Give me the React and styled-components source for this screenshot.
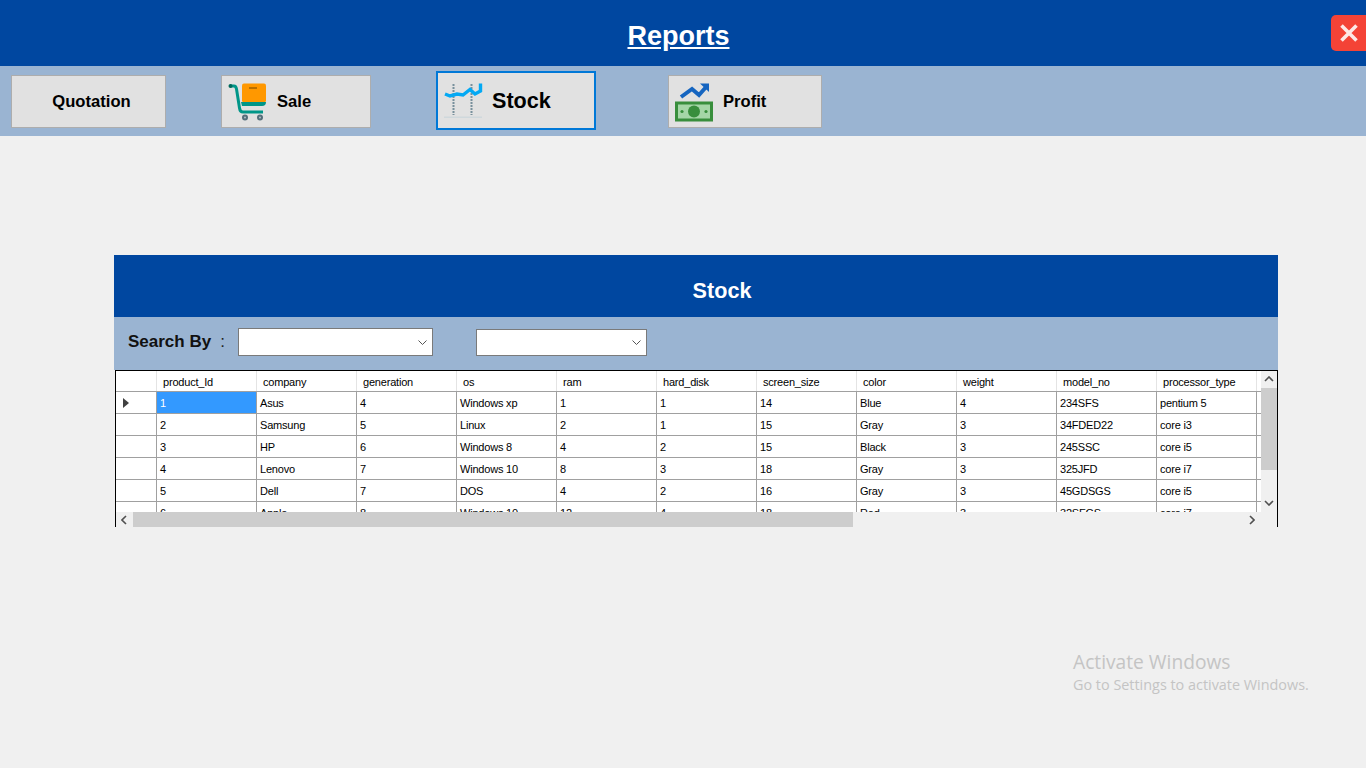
import styled, { createGlobalStyle } from "styled-components"

const columns = ["product_Id", "company", "generation", "os", "ram", "hard_disk", "screen_size", "color", "weight", "model_no", "processor_type"]

const rows = [
    ["1", "Asus", "4", "Windows xp", "1", "1", "14", "Blue", "4", "234SFS", "pentium 5"],
    ["2", "Samsung", "5", "Linux", "2", "1", "15", "Gray", "3", "34FDED22", "core i3"],
    ["3", "HP", "6", "Windows 8", "4", "2", "15", "Black", "3", "245SSC", "core i5"],
    ["4", "Lenovo", "7", "Windows 10", "8", "3", "18", "Gray", "3", "325JFD", "core i7"],
    ["5", "Dell", "7", "DOS", "4", "2", "16", "Gray", "3", "45GDSGS", "core i5"],
    ["6", "Apple", "8", "Windows 10", "12", "4", "18", "Red", "3", "32SFGS", "core i7"],
]

export default function App() {
    return (
        <Page>
            <GlobalStyle />
            <TitleBar>
                <Title>Reports</Title>
                <CloseButton aria-label="close">
                    <svg width="20" height="20" viewBox="0 0 20 20">
                        <path d="M2.5 2.5 L17.5 17.5 M17.5 2.5 L2.5 17.5" stroke="#fde8e6" strokeWidth="3.6" />
                    </svg>
                </CloseButton>
            </TitleBar>
            <Toolbar>
                <ToolButton $width={155} $left={11} $center>Quotation</ToolButton>
                <ToolButton $width={150} $left={55} $gap={9}><CartIcon />Sale</ToolButton>
                <ToolButton $width={160} $left={65} $gap={8} $active><StockIcon />Stock</ToolButton>
                <ToolButton $width={154} $left={72} $gap={10}><ProfitIcon />Profit</ToolButton>
            </Toolbar>
            <Panel>
                <PanelHeader>Stock</PanelHeader>
                <SearchBar>
                    <SearchLabel>Search By</SearchLabel>
                    <Colon>:</Colon>
                    <Combo $width={195} $height={28} />
                    <Combo $width={171} $height={27} $left={43} />
                </SearchBar>
                <GridFrame>
                    <GridBody>
                        <Table>
                            <HeaderRow>
                                <RowHead $header />
                                {columns.map((c) => <HeaderCell key={c}>{c}</HeaderCell>)}
                                <HeaderCell />
                            </HeaderRow>
                            {rows.map((r, index) => (
                                <Row key={index}>
                                    <RowHead>{index === 0 && <Pointer />}</RowHead>
                                    {r.map((v, i) => <Cell key={i} $selected={index === 0 && i === 0}>{v}</Cell>)}
                                    <Cell />
                                </Row>
                            ))}
                        </Table>
                        <VScroll>
                            <Arrow viewBox="0 0 10 6"><path d="M1 5 L5 1 L9 5" /></Arrow>
                            <VThumb />
                            <Arrow viewBox="0 0 10 6"><path d="M1 1 L5 5 L9 1" /></Arrow>
                        </VScroll>
                    </GridBody>
                    <HScroll>
                        <SideArrow viewBox="0 0 6 10"><path d="M5 1 L1 5 L5 9" /></SideArrow>
                        <HThumb />
                        <SideArrow viewBox="0 0 6 10"><path d="M1 1 L5 5 L1 9" /></SideArrow>
                    </HScroll>
                </GridFrame>
            </Panel>
            <Watermark>
                <WatermarkTitle>Activate Windows</WatermarkTitle>
                <WatermarkText>Go to Settings to activate Windows.</WatermarkText>
            </Watermark>
        </Page>
    )
}

function Combo({ $width, $height, $left }) {
    return (
        <ComboBox $width={$width} $height={$height} $left={$left}>
            <svg width="9" height="5" viewBox="0 0 9 5">
                <path d="M0.5 0.5 L4.5 4.5 L8.5 0.5" fill="none" stroke="#555" />
            </svg>
        </ComboBox>
    )
}

function CartIcon() {
    return (
        <svg width="40" height="40" viewBox="0 0 40 40">
            <rect x="14" y="1.5" width="24" height="19" rx="2" fill="#ff9800" />
            <rect x="21" y="5" width="8" height="2" fill="#b86f00" />
            <path d="M2 4 H6 Q8 4 8.5 7 L11.5 26 Q12 30 15 30 H35" fill="none" stroke="#009688" strokeWidth="3" />
            <path d="M13 20 H38 Q38 24 34 24 H14 Z" fill="#009688" />
            <circle cx="2.5" cy="4" r="2" fill="#00695c" />
            <circle cx="17" cy="35.5" r="3" fill="#546e7a" />
            <circle cx="32" cy="35.5" r="3" fill="#546e7a" />
            <circle cx="17" cy="35.5" r="1" fill="#b0bec5" />
            <circle cx="32" cy="35.5" r="1" fill="#b0bec5" />
        </svg>
    )
}

function StockIcon() {
    return (
        <svg width="40" height="38" viewBox="0 0 40 38">
            <path d="M9.5 2 V33 M27.5 2 V33" stroke="#78909c" strokeWidth="2" strokeDasharray="2 1" fill="none" />
            <rect x="0" y="34.5" width="38" height="1.5" fill="#cfd8dc" />
            <path d="M1 12 L6 14 L13 12 L19 13 L26 7.5 L31 12 L36.5 9 V1.5" fill="none" stroke="#03a9f4" strokeWidth="3.4" />
        </svg>
    )
}

function ProfitIcon() {
    return (
        <svg width="38" height="40" viewBox="0 0 38 40">
            <path d="M6 15 L17 7 L24 13 L32 4" fill="none" stroke="#1565c0" strokeWidth="4" />
            <path d="M25 1.5 H34 V10 Z" fill="#1565c0" />
            <rect x="0" y="19.5" width="38" height="20" fill="#388e3c" />
            <rect x="3" y="22.5" width="32" height="14" fill="#a5d6a7" />
            <circle cx="19" cy="29.5" r="6" fill="#388e3c" />
            <circle cx="7" cy="29.5" r="1.6" fill="#388e3c" />
            <circle cx="31" cy="29.5" r="1.6" fill="#388e3c" />
        </svg>
    )
}

const GlobalStyle = createGlobalStyle`
    body{
        margin: 0;
        background-color: #F0F0F0;
        font-family: "Liberation Sans", Arial, sans-serif;
        color: #000000;
    }
`
const Page = styled.div`
    position: relative;
    width: 1366px;
    height: 768px;
    overflow: hidden;
`
const TitleBar = styled.header`
    height: 66px;
    background-color: #0047A0;
    display: flex;
    align-items: center;
    justify-content: center;
`
const Title = styled.h1`
    margin: 7px 0 0 -9px;
    font-size: 27px;
    font-weight: 700;
    color: #FFFFFF;
    text-decoration: underline;
`
const CloseButton = styled.button`
    position: absolute;
    top: 15px;
    right: 0;
    width: 35px;
    height: 36px;
    padding: 0;
    border: none;
    border-radius: 5px 0 0 5px;
    background-color: #F44336;
    display: flex;
    align-items: center;
    justify-content: center;
`
const Toolbar = styled.nav`
    height: 70px;
    background-color: #9AB4D2;
    display: flex;
    align-items: center;
`
const ToolButton = styled.button`
    box-sizing: border-box;
    width: ${(props) => props.$width}px;
    height: ${(props) => (props.$active ? 59 : 53)}px;
    margin-left: ${(props) => props.$left}px;
    margin-top: ${(props) => (props.$active ? 0 : 1)}px;
    margin-bottom: ${(props) => (props.$active ? 1 : 0)}px;
    padding: 0 0 0 6px;
    border: ${(props) => (props.$active ? "2px solid #0078D7" : "1px solid #ADADAD")};
    background-color: #E1E1E1;
    color: #000000;
    display: flex;
    align-items: center;
    justify-content: ${(props) => (props.$center ? "center" : "flex-start")};
    gap: ${(props) => props.$gap || 0}px;
    font-family: inherit;
    font-size: ${(props) => (props.$active ? 21.6 : 16.6)}px;
    font-weight: 700;
`
const Panel = styled.section`
    width: 1164px;
    margin: 119px 0 0 114px;
`
const PanelHeader = styled.div`
    height: 62px;
    padding: 10px 0 0 52px;
    box-sizing: border-box;
    background-color: #0047A0;
    color: #FFFFFF;
    font-size: 21.6px;
    font-weight: 700;
    display: flex;
    align-items: center;
    justify-content: center;
`
const SearchBar = styled.div`
    height: 53px;
    background-color: #9AB4D2;
    display: flex;
    align-items: center;
    padding-left: 14px;
    padding-bottom: 3px;
    box-sizing: border-box;
`
const SearchLabel = styled.span`
    font-size: 17px;
    font-weight: 700;
    color: #111111;
`
const Colon = styled.span`
    margin: 0 13px 0 9px;
    font-size: 17px;
    color: #222222;
`
const ComboBox = styled.div`
    box-sizing: border-box;
    width: ${(props) => props.$width}px;
    height: ${(props) => props.$height}px;
    margin-left: ${(props) => props.$left || 0}px;
    padding-right: 5px;
    background-color: #FFFFFF;
    border: 1px solid #7A7A7A;
    display: flex;
    align-items: center;
    justify-content: flex-end;
`
const GridFrame = styled.div`
    box-sizing: border-box;
    height: 157px;
    margin-left: 1px;
    border-top: 1px solid #000000;
    border-left: 1px solid #000000;
    border-right: 1px solid #000000;
    background-color: #F0F0F0;
    display: flex;
    flex-direction: column;
`
const GridBody = styled.div`
    flex: 1;
    min-height: 0;
    display: flex;
`
const Table = styled.div`
    flex: 1;
    min-width: 0;
    overflow: hidden;
    background-color: #FFFFFF;
    font-size: 11px;
    letter-spacing: -0.2px;
`
const HeaderRow = styled.div`
    display: flex;
    height: 21px;
    border-bottom: 1px solid #A0A0A0;
    box-sizing: border-box;
`
const Row = styled.div`
    display: flex;
    height: 22px;
    border-bottom: 1px solid #A0A0A0;
    box-sizing: border-box;
`
const RowHead = styled.div`
    flex: 0 0 41px;
    box-sizing: border-box;
    display: flex;
    align-items: center;
    padding-left: 7px;
    border-right: 1px solid ${(props) => (props.$header ? "#E4E4E4" : "#A0A0A0")};
`
const Pointer = styled.span`
    width: 0;
    height: 0;
    border-top: 5px solid transparent;
    border-bottom: 5px solid transparent;
    border-left: 6px solid #404040;
`
const HeaderCell = styled.div`
    flex: 0 0 100px;
    box-sizing: border-box;
    padding: 1px 0 0 6px;
    display: flex;
    align-items: center;
    border-right: 1px solid #E4E4E4;
    white-space: nowrap;
`
const Cell = styled.div`
    flex: 0 0 100px;
    box-sizing: border-box;
    padding-left: 3px;
    display: flex;
    align-items: center;
    border-right: 1px solid #A0A0A0;
    white-space: nowrap;
    background-color: ${(props) => (props.$selected ? "#3399FF" : "transparent")};
    color: ${(props) => (props.$selected ? "#FFFFFF" : "#000000")};
`
const VScroll = styled.div`
    flex: 0 0 16px;
    display: flex;
    flex-direction: column;
    align-items: center;
    background-color: #F0F0F0;
`
const VThumb = styled.div`
    width: 16px;
    height: 82px;
    background-color: #CDCDCD;
    margin-bottom: auto;
`
const Arrow = styled.svg`
    width: 10px;
    height: 6px;
    margin: 5px 0 6px;
    flex: none;
    path{
        fill: none;
        stroke: #505050;
        stroke-width: 1.6;
    }
`
const HScroll = styled.div`
    flex: 0 0 15px;
    display: flex;
    align-items: center;
    background-color: #F0F0F0;
`
const HThumb = styled.div`
    width: 720px;
    height: 15px;
    margin-left: 1px;
    margin-right: auto;
    background-color: #CDCDCD;
`
const SideArrow = styled.svg`
    width: 6px;
    height: 10px;
    margin: 0 5px;
    flex: none;
    &:last-child{
        margin-right: 22px;
    }
    path{
        fill: none;
        stroke: #505050;
        stroke-width: 1.6;
    }
`
const Watermark = styled.div`
    position: absolute;
    left: 1073px;
    top: 650px;
    color: #C4C4C4;
`
const WatermarkTitle = styled.div`
    font-family: "Open Sans", sans-serif;
    font-size: 19.2px;
    line-height: 24px;
`
const WatermarkText = styled.div`
    font-family: "Open Sans", sans-serif;
    font-size: 14.4px;
    line-height: 22px;
`
